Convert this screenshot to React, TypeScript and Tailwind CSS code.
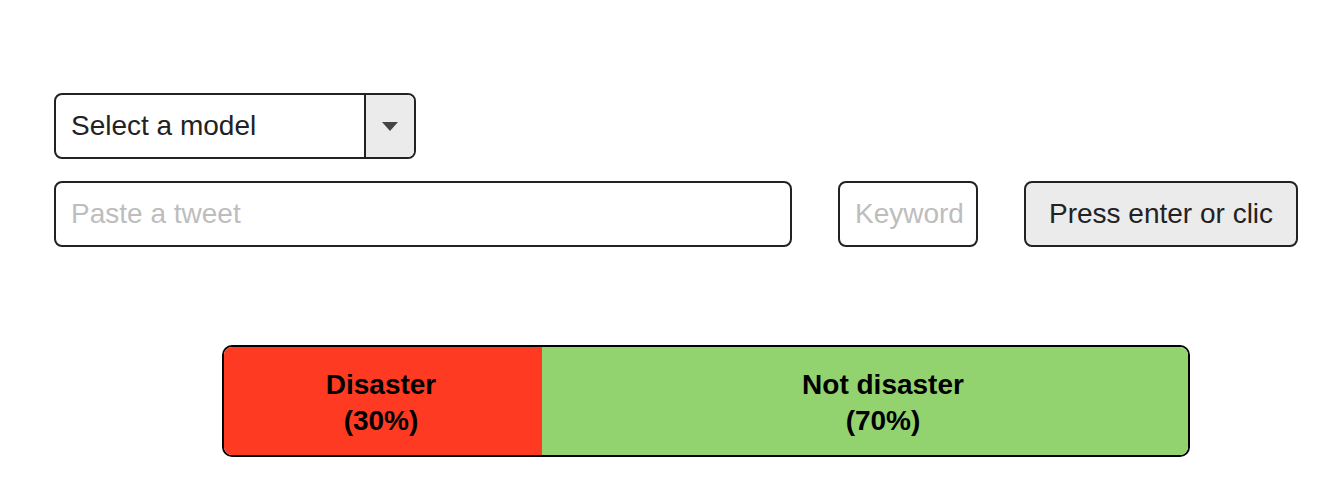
export default function App() {
  const font = { fontFamily: '"Liberation Sans", Arial, sans-serif' };

  return (
    <div className="min-h-screen bg-white text-[#222]" style={font}>
      <div className="pt-[93px] pl-[54px] pr-[26px]">
        {/* Model select */}
        <div className="flex w-[362px] h-[66px] rounded-lg border-2 border-[#222] overflow-hidden">
          <div className="flex-1 flex items-center pl-[15px] text-[28px]">Select a model</div>
          <div className="w-[50px] flex items-center justify-center bg-[#ebebeb] border-l-2 border-[#222]">
            <svg width="16" height="9" viewBox="0 0 16 9">
              <path d="M0 0 L16 0 L8 9 Z" fill="#444" />
            </svg>
          </div>
        </div>

        {/* Tweet row */}
        <div className="flex items-center mt-[22px] h-[66px]">
          <div className="w-[738px] h-full rounded-lg border-2 border-[#222] flex items-center pl-[15px] text-[28px] text-[#bdbdbd]">
            Paste a tweet
          </div>
          <div className="ml-[46px] w-[140px] h-full rounded-lg border-2 border-[#222] flex items-center pl-[15px] text-[28px] text-[#bdbdbd] overflow-hidden whitespace-nowrap">
            Keyword
          </div>
          <button className="ml-[46px] w-[274px] h-full rounded-lg border-2 border-[#222] bg-[#ebebeb] text-[28px] text-[#222] pl-[23px] text-left overflow-hidden whitespace-nowrap">
            Press enter or clic
          </button>
        </div>
      </div>

      {/* Result bar */}
      <div className="mt-[98px] ml-[222px] w-[968px] h-[112px] rounded-[10px] border-2 border-black overflow-hidden flex font-bold text-[28px] leading-[36px] text-black">
        <div className="w-[318px] bg-[#ff3a22] flex flex-col items-center justify-center pt-[3px] pr-[4px]">
          <span>Disaster</span>
          <span>(30%)</span>
        </div>
        <div className="flex-1 bg-[#93d36f] flex flex-col items-center justify-center pt-[3px] pl-[36px]">
          <span>Not disaster</span>
          <span>(70%)</span>
        </div>
      </div>
    </div>
  );
}
